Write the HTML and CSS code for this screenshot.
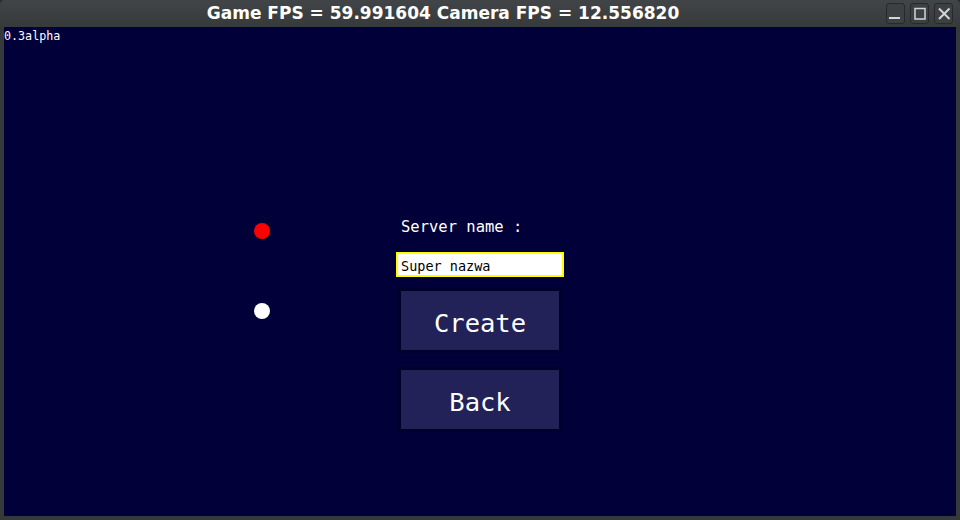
FILE: index.html
```html
<!DOCTYPE html>
<html lang="pl">
<head>
<meta charset="utf-8">
<title>Game</title>
<link rel="stylesheet" href="styles.css">
</head>
<body>
<div class="window">
  <header class="titlebar">
    <div class="title">Game FPS = 59.991604 Camera FPS = 12.556820</div>
    <div class="controls">
      <span class="wbtn">
        <svg width="19" height="21" viewBox="0 0 19 21"><rect x="3" y="14" width="11" height="2" fill="#d4d6d6"/></svg>
      </span>
      <span class="wbtn">
        <svg width="19" height="21" viewBox="0 0 19 21"><rect x="5" y="5.5" width="10" height="10.5" fill="none" stroke="#d4d6d6" stroke-width="1.5"/></svg>
      </span>
      <span class="wbtn">
        <svg width="19" height="21" viewBox="0 0 19 21"><path d="M5 5.5 L15.5 16 M15.5 5.5 L5 16" stroke="#d4d6d6" stroke-width="2" fill="none"/></svg>
      </span>
    </div>
  </header>
  <main class="content">
    <div class="version">0.3alpha</div>
    <div class="stage">
      <div class="dots">
        <span class="dot dot-red"></span>
        <span class="dot dot-white"></span>
      </div>
      <div class="form">
        <div class="label">Server name :</div>
        <div class="field">Super nazwa</div>
        <div class="btn">Create</div>
        <div class="btn btn-back">Back</div>
      </div>
    </div>
  </main>
</div>
</body>
</html>
```
FILE: styles.css
```css
html, body {
  margin: 0;
  padding: 0;
  background: #2c2f30;
}
.window {
  width: 960px;
  height: 520px;
  background: #35393a;
  display: flex;
  flex-direction: column;
  border-radius: 5px 5px 0 0;
  overflow: hidden;
}
.titlebar {
  height: 27px;
  flex: none;
  display: flex;
  align-items: flex-start;
  background: linear-gradient(#414547, #363a3b);
  padding-right: 7px;
}
.title {
  flex: 1;
  padding-left: 4px;
  text-align: center;
  font-family: "DejaVu Sans", sans-serif;
  font-weight: bold;
  font-size: 17px;
  line-height: 27px;
  color: #ffffff;
  white-space: nowrap;
}
.controls {
  display: flex;
  gap: 5px;
  padding-top: 3px;
  margin-left: 4px;
}
.wbtn {
  width: 19px;
  height: 21px;
  box-sizing: border-box;
  border: 1px solid #27292a;
  border-radius: 3px;
  background: #3c4042;
  display: block;
}
.wbtn svg {
  display: block;
  margin: -1px;
}
.content {
  margin: 0 4px 4px;
  height: 489px;
  background: #020038;
  font-family: "DejaVu Sans Mono", monospace;
  color: #ffffff;
}
.version {
  font-size: 11.7px;
  line-height: 16px;
  height: 16px;
  padding-top: 1px;
}
.stage {
  display: flex;
  align-items: flex-start;
  padding-top: 173px;
  padding-left: 250px;
}
.dots {
  width: 16px;
  display: flex;
  flex-direction: column;
  gap: 64px;
  padding-top: 6px;
}
.dot {
  display: block;
  width: 16px;
  height: 16px;
  border-radius: 50%;
}
.dot-red { background: #ff0000; }
.dot-white { background: #ffffff; }
.form {
  margin-left: 126px;
  display: flex;
  flex-direction: column;
  align-items: flex-start;
}
.label {
  margin-left: 5px;
  font-size: 15.5px;
  line-height: 20px;
  height: 20px;
  white-space: pre;
}
.field {
  margin-top: 15px;
  width: 158px;
  height: 19px;
  padding: 2px 3px 0 3px;
  border: 2px solid #ffff00;
  background: #ffffff;
  color: #000000;
  font-size: 13.5px;
  line-height: 21px;
  overflow: hidden;
  white-space: pre;
}
.btn {
  margin-top: 11px;
  margin-left: 2px;
  width: 158px;
  height: 55px;
  padding-top: 4px;
  border: 3px solid #00002a;
  background: #222258;
  text-align: center;
  font-size: 25.5px;
  line-height: 56px;
  color: #ffffff;
}
.btn-back {
  margin-top: 14px;
}
```
